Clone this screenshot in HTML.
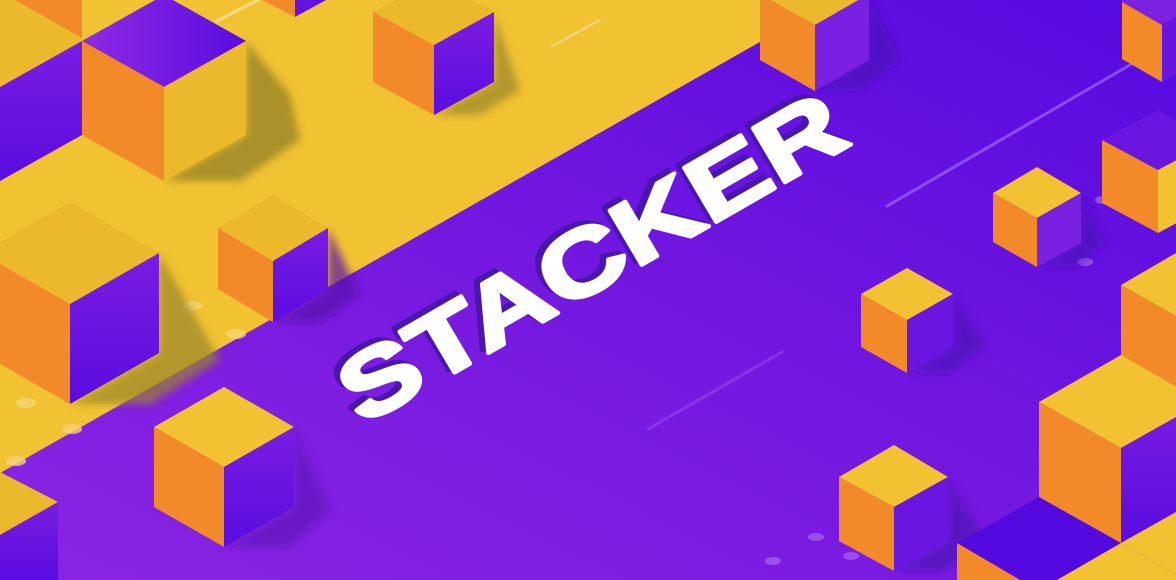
<!DOCTYPE html>
<html><head><meta charset="utf-8"><style>html,body{margin:0;padding:0;width:1176px;height:580px;overflow:hidden;background:#7a1de0}svg{display:block}</style></head>
<body>
<svg width="1176" height="580" viewBox="0 0 1176 580" xmlns="http://www.w3.org/2000/svg">
<defs>
<linearGradient id="bg" x1="0" y1="1" x2="1" y2="0">
<stop offset="0" stop-color="#8a26e2"/><stop offset="0.5" stop-color="#7418e0"/><stop offset="1" stop-color="#560ae0"/>
</linearGradient>
<linearGradient id="pf" x1="0" y1="0" x2="0" y2="1">
<stop offset="0" stop-color="#7a1de2"/><stop offset="1" stop-color="#5a0ce0"/>
</linearGradient>
<linearGradient id="pt" x1="0" y1="0" x2="1" y2="0">
<stop offset="0" stop-color="#8e2ae2"/><stop offset="1" stop-color="#5a0ce0"/>
</linearGradient>
<filter id="bl" x="-50%" y="-50%" width="200%" height="200%"><feGaussianBlur stdDeviation="4"/></filter>
</defs>
<rect width="1176" height="580" fill="url(#bg)"/>
<polygon points="0,0 834,0 0,473" fill="#f1c332"/>
<line x1="887" y1="206" x2="1135" y2="62" stroke="#9a5cf0" stroke-width="3" stroke-linecap="round" opacity="0.8"/>
<line x1="648" y1="429" x2="782" y2="352" stroke="#9040ea" stroke-width="3" stroke-linecap="round" opacity="0.7"/>
<line x1="215" y1="22" x2="262" y2="-2" stroke="#f7dc80" stroke-width="3"/>
<line x1="551" y1="47" x2="600" y2="20" stroke="#f7dc80" stroke-width="2"/>
<g fill="#f6d676" opacity="0.8">
<ellipse cx="192" cy="306" rx="10" ry="5"/><ellipse cx="236" cy="334" rx="10" ry="5"/>
<ellipse cx="26" cy="403" rx="10" ry="5"/><ellipse cx="72" cy="429" rx="10" ry="5"/><ellipse cx="16" cy="461" rx="10" ry="5"/>
</g>
<g fill="#a666ee" opacity="0.7">
<ellipse cx="816" cy="537" rx="8" ry="4"/><ellipse cx="773" cy="561" rx="8" ry="4"/><ellipse cx="851" cy="556" rx="8" ry="4"/>
<ellipse cx="1085" cy="262" rx="8" ry="4"/><ellipse cx="1103" cy="200" rx="8" ry="4"/>
</g>
<g filter="url(#bl)">
<polygon points="246,41 246,135 164,181 240,181 300,140 290,95" fill="#9a8426" opacity="0.8"/>
<polygon points="494,12 494,82 434,115 480,115 520,90" fill="#9a8426" opacity="0.7"/>
<polygon points="159,253 159,353 71,404 150,404 220,360" fill="#9a8426" opacity="0.7"/>
<polygon points="328,228 328,289 274,322 320,322 360,295" fill="#5a14a8" opacity="0.7"/>
<polygon points="294,427 294,507 224,547 290,547 330,510" fill="#5a14b8" opacity="0.6"/>
<polygon points="869,-6 869,60 815,91 860,91 900,60" fill="#4a10b0" opacity="0.6"/>
<polygon points="1081,193 1081,243 1037,267 1075,267 1105,245" fill="#4a10b0" opacity="0.6"/>
<polygon points="953,294 953,347 907,373 950,373 985,345" fill="#4a10b0" opacity="0.6"/>
<polygon points="948,477 948,541 894,571 945,571 985,540" fill="#4a10b0" opacity="0.6"/>
</g>
<polygon points="0,0 82,0 82,41 0,87" fill="#ecb92c"/>
<polygon points="15,0 82,0 82,38" fill="#f28a2a"/>
<polygon points="0,87 82,41 82,135 0,181" fill="url(#pf)"/>
<polygon points="164,-5 246,41 164,87 82,41" fill="url(#pt)"/>
<polygon points="82,41 164,87 164,181 82,135" fill="#f28a2a"/>
<polygon points="164,87 246,41 246,135 164,181" fill="#ecb92c"/>
<polygon points="262,0 295,0 295,17" fill="#f28a2a"/>
<polygon points="295,0 326,0 295,17" fill="#6412e0"/>
<polygon points="434,-21 494,12 434,45 373,12" fill="#ecb92c"/>
<polygon points="373,12 434,45 434,115 373,82" fill="#f28a2a"/>
<polygon points="434,45 494,12 494,82 434,115" fill="url(#pf)"/>
<polygon points="70,202 159,253 70,304 -19,253" fill="#ecb92c"/>
<polygon points="-19,253 70,304 70,404 -19,353" fill="#f28a2a"/>
<polygon points="70,304 159,253 159,353 70,404" fill="url(#pf)"/>
<polygon points="273,195 328,228 273,261 218,228" fill="#ecb92c"/>
<polygon points="218,228 273,261 273,322 218,289" fill="#f28a2a"/>
<polygon points="273,261 328,228 328,289 273,322" fill="url(#pf)"/>
<polygon points="224,387 294,427 224,467 154,427" fill="#f2c232"/>
<polygon points="154,427 224,467 224,547 154,507" fill="#f28a2a"/>
<polygon points="224,467 294,427 294,507 224,547" fill="url(#pf)"/>
<polygon points="0,472 58,502 0,535" fill="#ecb92c"/>
<polygon points="0,535 58,502 58,580 0,580" fill="url(#pf)"/>
<polygon points="815,-37 869,-6 815,25 760,-6" fill="#ecb92c"/>
<polygon points="760,-6 815,25 815,91 760,60" fill="#f28a2a"/>
<polygon points="815,25 869,-6 869,60 815,91" fill="#7a20e2"/>
<polygon points="1122,2 1162,25 1176,17 1176,0 1122,0" fill="#7a22e0"/>
<polygon points="1122,2 1162,25 1162,82 1122,59" fill="#f28a2a"/>
<polygon points="1162,25 1176,17 1176,74 1162,82" fill="#6a14e0"/>
<polygon points="1037,167 1081,193 1037,218 993,193" fill="#f2c232"/>
<polygon points="993,193 1037,218 1037,267 993,242" fill="#f28a2a"/>
<polygon points="1037,218 1081,193 1081,243 1037,267" fill="#7a20e2"/>
<polygon points="1158,110 1214,140 1158,170 1102,140" fill="#6a16e0"/>
<polygon points="1102,140 1158,170 1158,233 1102,203" fill="#f28a2a"/>
<polygon points="1158,170 1214,140 1214,203 1158,233" fill="#f2c232"/>
<polygon points="907,268 953,294 907,320 861,294" fill="#f2c232"/>
<polygon points="861,294 907,320 907,373 861,347" fill="#f28a2a"/>
<polygon points="907,320 953,294 953,347 907,373" fill="#6a16e0"/>
<polygon points="894,445 948,477 894,507 839,477" fill="#f2c232"/>
<polygon points="839,477 894,507 894,571 839,541" fill="#f28a2a"/>
<polygon points="894,507 948,477 948,541 894,571" fill="#6a16e0"/>
<polygon points="1121,285 1176,253 1176,316" fill="#f2c232"/>
<polygon points="1121,285 1176,316 1176,390 1121,358" fill="#f28a2a"/>
<polygon points="1039,497 1121,543 1039,590 957,543" fill="#520ade"/>
<polygon points="957,543 1020,580 957,580" fill="#f28a2a"/>
<polygon points="1121,355 1203,402 1121,448 1039,402" fill="#f2c232"/>
<polygon points="1039,402 1121,448 1121,543 1039,497" fill="#f28a2a"/>
<polygon points="1121,448 1203,402 1203,497 1121,543" fill="url(#pf)"/>
<polygon points="1057,580 1121,543 1176,575 1176,580" fill="#f2c232"/>
<polygon points="1121,543 1176,512 1176,575" fill="#f2c232"/>
<g font-family="'Liberation Sans', sans-serif" font-weight="bold" font-size="60">
<text transform="matrix(1.72,-0.99,0.78,1.32,356,423)" fill="#4a16b0" stroke="#4a16b0" stroke-width="3" stroke-linejoin="round">STACKER</text>
<text transform="matrix(1.72,-0.99,0.78,1.32,362,426)" fill="#ffffff" stroke="#ffffff" stroke-width="2.5" stroke-linejoin="round">STACKER</text>
</g>
</svg>
</body></html>
